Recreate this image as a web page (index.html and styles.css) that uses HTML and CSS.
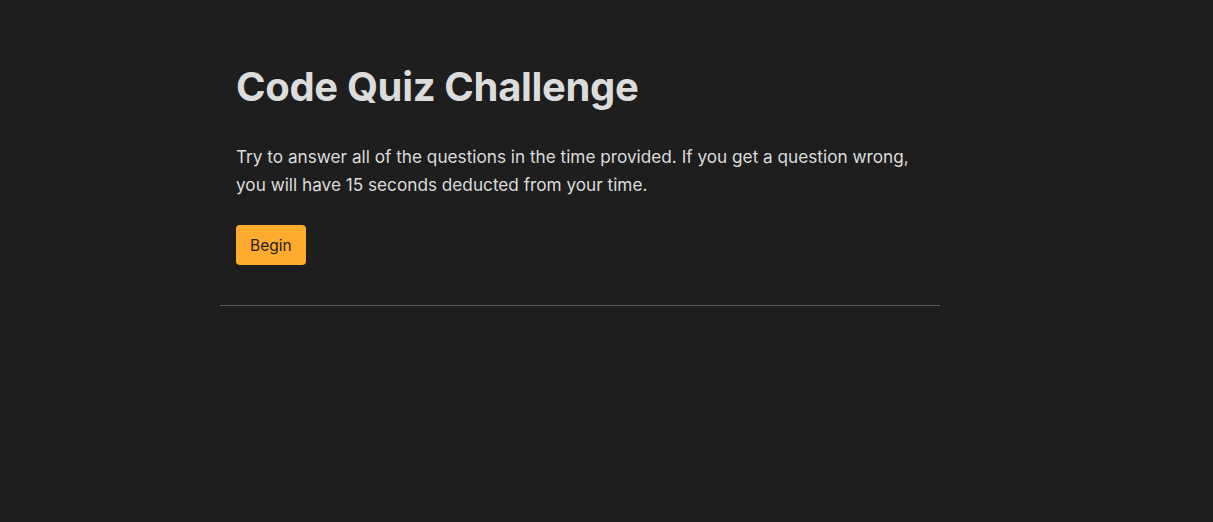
FILE: index.html
```html
<!DOCTYPE html>
<html lang="en">
<head>
<meta charset="utf-8">
<title>Code Quiz</title>
<link rel="stylesheet" href="styles.css">
</head>
<body>
<main class="container">
  <section class="intro">
    <h1 class="title">Code Quiz Challenge</h1>
    <p class="lead">Try to answer all of the questions in the time provided. If you get a question wrong, you will have 15 seconds deducted from your time.</p>
    <button class="btn" type="button">Begin</button>
  </section>
</main>
</body>
</html>
```
FILE: styles.css
```css
html, body {
  margin: 0;
  padding: 0;
  background: #1e1e1e;
  color: #dcdcdc;
  font-family: Inter, "Noto Sans", sans-serif;
}
.container {
  width: 720px;
  margin-left: 220px;
  padding-top: 62px;
}
.intro {
  padding: 0 16px 40px;
  border-bottom: 1px solid #5a5a5a;
}
.title {
  margin: 0;
  font-size: 40px;
  font-weight: 700;
  line-height: 50px;
  letter-spacing: -0.35px;
  color: #dcdcdc;
}
.lead {
  margin: 31px 0 26px;
  font-size: 17.2px;
  line-height: 28px;
  color: #dcdcdc;
}
.btn {
  display: block;
  height: 40px;
  padding: 0 14px;
  border: none;
  border-radius: 4px;
  background: #ffab2e;
  color: #222;
  font-family: inherit;
  font-size: 15.5px;
}
```
